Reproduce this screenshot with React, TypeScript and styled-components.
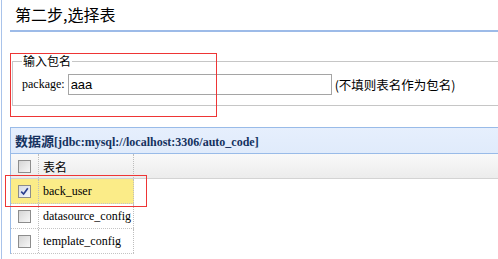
import React from "react";
import styled, { createGlobalStyle } from "styled-components";

const Global = createGlobalStyle`
  html, body { margin: 0; padding: 0; background: #fff; overflow: hidden; }
  body { font-family: "Liberation Serif", "Noto Sans CJK SC", serif; color: #000; }
`;

const Page = styled.div`
  position: relative;
  margin-left: 1px;
  border-left: 1px solid #a9c3ea;
  padding-left: 8px;
  min-height: 259px;
  box-sizing: border-box;
  overflow: hidden;
`;

const Title = styled.div`
  height: 30px;
  line-height: 28px;
  padding-left: 5px;
  border-bottom: 2px solid #9dbbe8;
  font-family: "Noto Sans CJK SC", sans-serif;
  font-size: 16px;
  margin-right: -20px;
`;

const Fieldset = styled.fieldset`
  margin: 21px -20px 0 2px;
  padding: 5px 9px 10px 9px;
  border: 1px solid #c6c6c6;
  min-width: 0;
`;

const Legend = styled.legend`
  padding: 0 1px;
  font-family: "Noto Sans CJK SC", sans-serif;
  font-size: 12px;
  line-height: 16px;
`;

const FieldRow = styled.div`
  display: flex;
  align-items: center;
  height: 21px;
`;

const Label = styled.span`
  font-family: "Liberation Serif", serif;
  font-size: 12px;
  margin-right: 3px;
`;

const TextInput = styled.input`
  box-sizing: border-box;
  width: 264px;
  height: 21px;
  margin: 0;
  padding: 0 2px;
  border: 1px solid #a5a5a5;
  font-family: "Liberation Sans", Arial, sans-serif;
  font-size: 13px;
  color: #000;
  outline: none;
`;

const Hint = styled.span`
  margin-left: 3px;
  font-family: "Noto Sans CJK SC", sans-serif;
  font-size: 12.5px;
`;

const Panel = styled.div`
  margin: 21px -20px 0 0;
  border-top: 1px solid #99bbe8;
  border-left: 1px solid #99bbe8;
`;

const PanelHeader = styled.div`
  height: 25px;
  line-height: 25px;
  padding-left: 4px;
  background: linear-gradient(#e6effd, #e0ebfb);
  border-bottom: 1px solid #99bbe8;
  color: #15325f;
  font-weight: bold;
  font-size: 12px;
  font-family: "Liberation Serif", "Noto Sans CJK SC", serif;
`;

const Cjk = styled.span`
  font-family: "Noto Sans CJK SC", sans-serif;
  font-size: 13px;
`;

const HeadRow = styled.div`
  display: flex;
  height: 24px;
  background: linear-gradient(#f9f9f9, #ececec);
  border-bottom: 1px solid #d3d3d3;
`;

const Row = styled.div<{ $selected?: boolean }>`
  display: flex;
  width: 123px;
  height: 24px;
  border-bottom: 1px dotted #c4c4c4;
  background: ${(p) => (p.$selected ? "#fbec88" : "#fff")};
`;

const CheckCell = styled.div`
  width: 27px;
  display: flex;
  align-items: center;
  justify-content: center;
  border-right: 1px dotted #bdbdbd;
`;

const NameCell = styled.div<{ $head?: boolean }>`
  width: 90px;
  padding-left: 4px;
  display: flex;
  align-items: center;
  border-right: 1px dotted #bdbdbd;
  font-size: 12px;
  font-family: ${(p) =>
    p.$head ? `"Noto Sans CJK SC", sans-serif` : `"Liberation Serif", serif`};
`;

const Box = styled.span<{ $checked?: boolean }>`
  box-sizing: border-box;
  width: 13px;
  height: 13px;
  border: 1px solid #8c8c8c;
  background: ${(p) =>
    p.$checked
      ? "linear-gradient(135deg, #d6dbe6, #f4f6fa)"
      : "linear-gradient(135deg, #d5d5d5, #f7f7f7)"};
  display: flex;
  align-items: center;
  justify-content: center;
`;

const Annot = styled.div<{ $x: number; $y: number; $w: number; $h: number }>`
  position: absolute;
  left: ${(p) => p.$x}px;
  top: ${(p) => p.$y}px;
  width: ${(p) => p.$w}px;
  height: ${(p) => p.$h}px;
  border: 1px solid #ee3535;
  pointer-events: none;
`;

const Check = ({ checked }: { checked?: boolean }) => (
  <Box $checked={checked}>
    {checked && (
      <svg width="9" height="9" viewBox="0 0 9 9">
        <path d="M1.2 4.6 L3.6 7 L7.8 1.2" fill="none" stroke="#2b3f8f" strokeWidth="1.6" />
      </svg>
    )}
  </Box>
);

const rows = [
  { name: "back_user", checked: true },
  { name: "datasource_config", checked: false },
  { name: "template_config", checked: false },
];

export default function App() {
  return (
    <>
      <Global />
      <Page>
        <Title>第二步,选择表</Title>
        <Fieldset>
          <Legend>输入包名</Legend>
          <FieldRow>
            <Label>package:</Label>
            <TextInput defaultValue="aaa" />
            <Hint>(不填则表名作为包名)</Hint>
          </FieldRow>
        </Fieldset>
        <Panel>
          <PanelHeader>
            <Cjk>数据源</Cjk>[jdbc:mysql://localhost:3306/auto_code]
          </PanelHeader>
          <HeadRow>
            <CheckCell>
              <Check />
            </CheckCell>
            <NameCell $head>表名</NameCell>
          </HeadRow>
          {rows.map((r) => (
            <Row key={r.name} $selected={r.checked}>
              <CheckCell>
                <Check checked={r.checked} />
              </CheckCell>
              <NameCell>{r.name}</NameCell>
            </Row>
          ))}
        </Panel>
        <Annot $x={8} $y={53} $w={205} $h={62} />
        <Annot $x={3} $y={175} $w={140} $h={30} />
      </Page>
    </>
  );
}
